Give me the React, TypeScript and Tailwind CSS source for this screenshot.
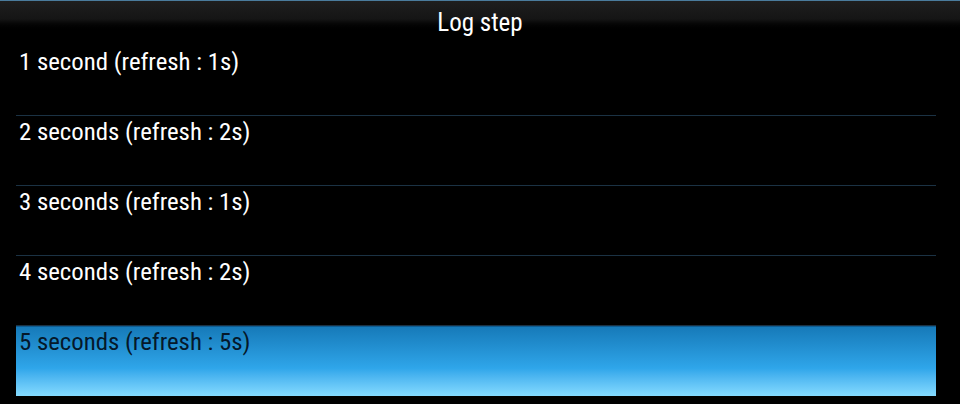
const steps = [
  { label: "1 second (refresh : 1s)" },
  { label: "2 seconds (refresh : 2s)" },
  { label: "3 seconds (refresh : 1s)" },
  { label: "4 seconds (refresh : 2s)" },
  { label: "5 seconds (refresh : 5s)", selected: true },
];

export default function App() {
  return (
    <div className="w-[960px] h-[404px] bg-black text-white font-['Roboto_Condensed',sans-serif] overflow-hidden">
      <div className="h-[46px] border-t border-[#4a7b9c] bg-gradient-to-b from-[#1e1e1e] via-[#151515] via-40% to-black to-70% flex justify-center">
        <span className="text-[25px] leading-[28px] pt-[8px] text-white">Log step</span>
      </div>
      <div className="pl-4 pr-6">
        {steps.map((s) =>
          s.selected ? (
            <div
              key={s.label}
              className="h-[70px] pl-[3px] border-t border-[#0f5d92] bg-gradient-to-b from-[#167ab9] via-[#2fa6ea] via-60% to-[#84dbff] text-[#05182a] text-[24.8px] leading-[30px]"
            >
              {s.label}
            </div>
          ) : (
            <div
              key={s.label}
              className="h-[70px] pl-[3px] pt-px border-b border-[#1b3244] text-[24.8px] leading-[30px] text-white"
            >
              {s.label}
            </div>
          )
        )}
      </div>
    </div>
  );
}
